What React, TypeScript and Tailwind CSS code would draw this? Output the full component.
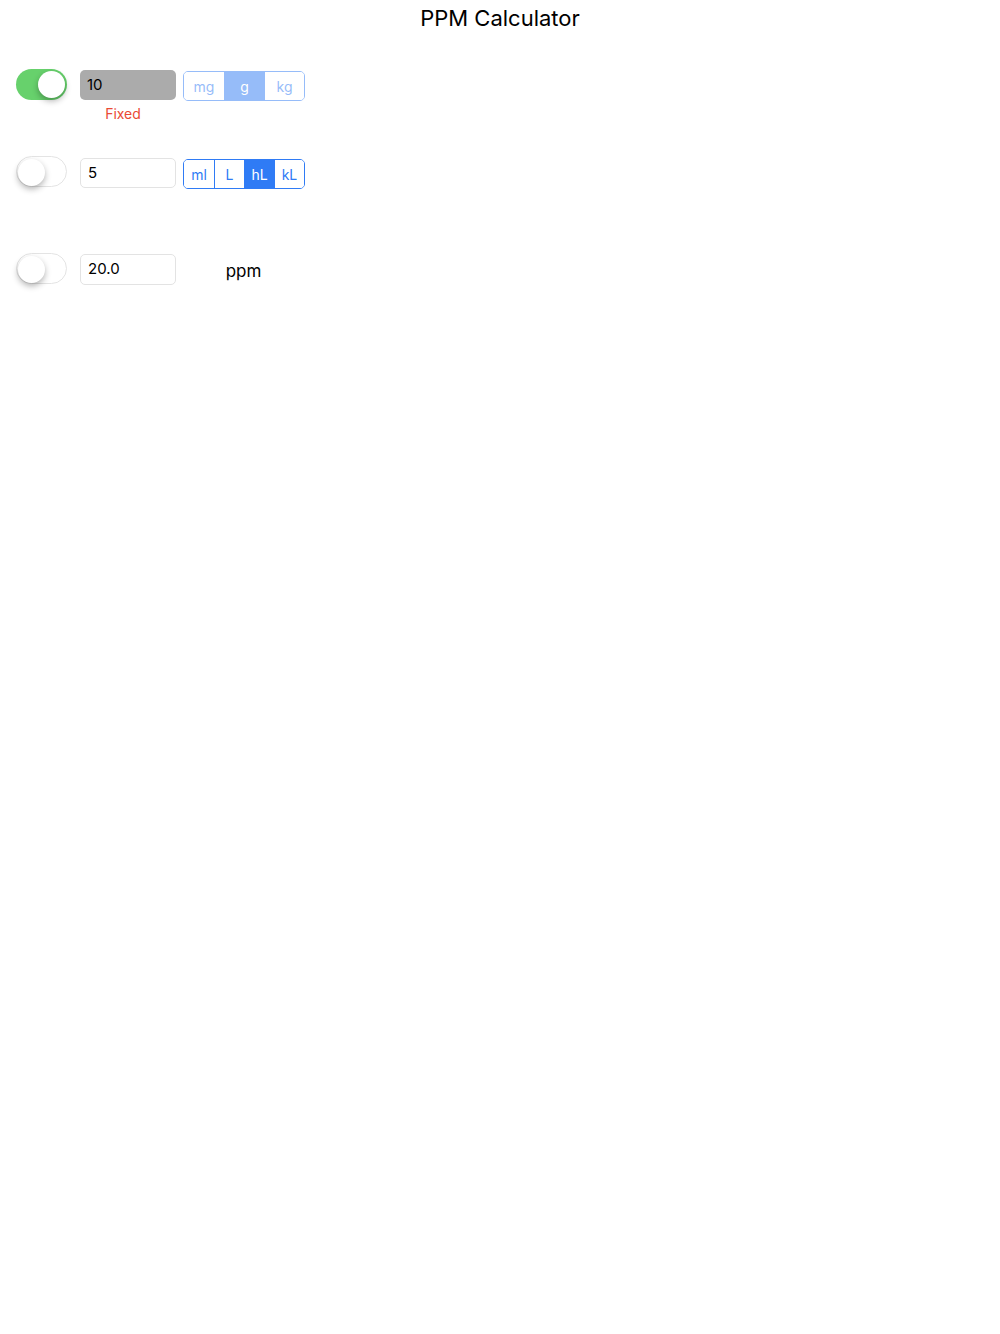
import React from "react";

const font = { fontFamily: "Inter, 'Noto Sans', sans-serif" };

function Toggle({ on }: { on?: boolean }) {
  return (
    <div
      className={
        "relative w-[51px] h-[31px] rounded-full shrink-0 " +
        (on ? "bg-[#67d16c]" : "bg-white border border-[#e4e4e4]")
      }
    >
      <div
        className={
          "absolute top-[2px] w-[27px] h-[27px] rounded-full bg-white shadow-[0_3px_6px_rgba(0,0,0,0.3)] " +
          (on ? "right-[2px]" : "left-[1px] top-[1px]")
        }
      />
    </div>
  );
}

function Segments({
  items,
  selected,
  dim,
  widths,
}: {
  items: string[];
  selected: number;
  dim?: boolean;
  widths: string;
}) {
  return (
    <div
      className={
        "flex h-[30px] rounded-[5px] border-[1.5px] border-[#2f7bf5] overflow-hidden shrink-0 " +
        (dim ? "opacity-50" : "")
      }
    >
      {items.map((it, i) => (
        <div
          key={it}
          className={
            widths +
            " flex items-center justify-center text-[14px] " +
            (i > 0 ? "border-l-[1.5px] border-[#2f7bf5] " : "") +
            (i === selected ? "bg-[#2f7bf5] text-white" : "bg-white text-[#2f7bf5]")
          }
        >
          {it}
        </div>
      ))}
    </div>
  );
}

export default function App() {
  return (
    <div className="min-h-[1334px] bg-white text-black" style={font}>
      <div className="h-[36px] flex items-center justify-center text-[22px]">
        PPM Calculator
      </div>

      <div className="pl-[16px] pt-[33px]">
        {/* mass row */}
        <div className="flex items-start gap-[13px]">
          <Toggle on />
          <div className="flex flex-col items-center pt-[1px]">
            <div className="w-[96px] h-[30px] rounded-[5px] bg-[#ababab] flex items-center pl-[7px] text-[15px]">
              10
            </div>
            <div className="mt-[3px] pr-[10px] text-[14px] text-[#ea4a34]">Fixed</div>
          </div>
          <div className="pt-[2px] -ml-[6px]">
            <Segments items={["mg", "g", "kg"]} selected={1} dim widths="w-[40px]" />
          </div>
        </div>

        {/* volume row */}
        <div className="flex items-start gap-[13px] mt-[32px]">
          <Toggle />
          <div className="w-[96px] h-[30px] mt-[2px] rounded-[5px] border border-[#e3e3e3] flex items-center pl-[7px] text-[15px]">
            5
          </div>
          <div className="pt-[3px] -ml-[6px]">
            <Segments items={["ml", "L", "hL", "kL"]} selected={2} widths="w-[30px]" />
          </div>
        </div>

        {/* ppm row */}
        <div className="flex items-start gap-[13px] mt-[64px]">
          <Toggle />
          <div className="w-[96px] h-[31px] mt-[1px] rounded-[5px] border border-[#e3e3e3] flex items-center pl-[7px] text-[15px]">
            20.0
          </div>
          <div className="w-[121px] h-[32px] pt-[5px] -ml-[6px] flex items-center justify-center text-[17px]">
            ppm
          </div>
        </div>
      </div>
    </div>
  );
}
